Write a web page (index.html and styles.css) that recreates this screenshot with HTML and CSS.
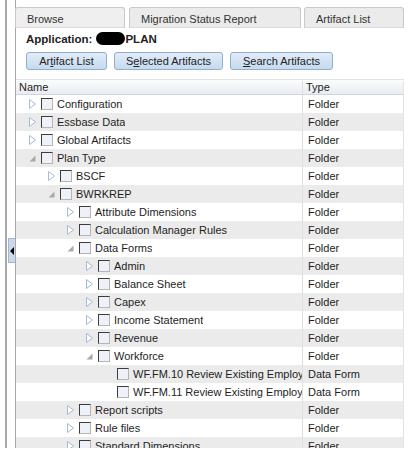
FILE: index.html
```html
<!DOCTYPE html>
<html lang="en">
<head>
    <meta charset="UTF-8">
    <title>Migration - Browse</title>
    <link rel="stylesheet" href="styles.css">
</head>
<body>

<div class="page">
    <div class="gutter">
        <div class="collapse"><span class="collapse-arrow"></span></div>
    </div>

    <div class="panel">
        <div class="tabs">
            <div class="tab tab-browse active">Browse</div>
            <div class="tab tab-migration">Migration Status Report</div>
            <div class="tab tab-artifacts">Artifact List</div>
        </div>

        <div class="app-title">
            Application: <span class="redacted"></span>PLAN
        </div>

        <div class="toolbar">
            <button class="btn btn-list">Ar<u>t</u>ifact List</button>
            <button class="btn btn-selected">S<u>e</u>lected Artifacts</button>
            <button class="btn btn-search"><u>S</u>earch Artifacts</button>
        </div>

        <div class="grid">
            <div class="grid-head">
                <div class="name">Name</div>
                <div class="type">Type</div>
            </div>

            <div class="grid-body">
                <div class="row">
                    <div class="name lvl-0"><svg class="exp" width="7" height="10"><path d="M0.5 0.5 L6.5 5 L0.5 9.5 Z" fill="#fff" stroke="#a6bad2"/></svg><span class="check"></span><span class="label">Configuration</span></div>
                    <div class="type">Folder</div>
                </div>
                <div class="row">
                    <div class="name lvl-0"><svg class="exp" width="7" height="10"><path d="M0.5 0.5 L6.5 5 L0.5 9.5 Z" fill="#fff" stroke="#a6bad2"/></svg><span class="check"></span><span class="label">Essbase Data</span></div>
                    <div class="type">Folder</div>
                </div>
                <div class="row">
                    <div class="name lvl-0"><svg class="exp" width="7" height="10"><path d="M0.5 0.5 L6.5 5 L0.5 9.5 Z" fill="#fff" stroke="#a6bad2"/></svg><span class="check"></span><span class="label">Global Artifacts</span></div>
                    <div class="type">Folder</div>
                </div>
                <div class="row">
                    <div class="name lvl-0"><svg class="exp" width="7" height="10"><path d="M6.5 2.5 L6.5 8.5 L0.5 8.5 Z" fill="#a9a9a9"/></svg><span class="check"></span><span class="label">Plan Type</span></div>
                    <div class="type">Folder</div>
                </div>
                <div class="row">
                    <div class="name lvl-1"><svg class="exp" width="7" height="10"><path d="M0.5 0.5 L6.5 5 L0.5 9.5 Z" fill="#fff" stroke="#a6bad2"/></svg><span class="check"></span><span class="label">BSCF</span></div>
                    <div class="type">Folder</div>
                </div>
                <div class="row">
                    <div class="name lvl-1"><svg class="exp" width="7" height="10"><path d="M6.5 2.5 L6.5 8.5 L0.5 8.5 Z" fill="#a9a9a9"/></svg><span class="check"></span><span class="label">BWRKREP</span></div>
                    <div class="type">Folder</div>
                </div>
                <div class="row">
                    <div class="name lvl-2"><svg class="exp" width="7" height="10"><path d="M0.5 0.5 L6.5 5 L0.5 9.5 Z" fill="#fff" stroke="#a6bad2"/></svg><span class="check"></span><span class="label">Attribute Dimensions</span></div>
                    <div class="type">Folder</div>
                </div>
                <div class="row">
                    <div class="name lvl-2"><svg class="exp" width="7" height="10"><path d="M0.5 0.5 L6.5 5 L0.5 9.5 Z" fill="#fff" stroke="#a6bad2"/></svg><span class="check"></span><span class="label">Calculation Manager Rules</span></div>
                    <div class="type">Folder</div>
                </div>
                <div class="row">
                    <div class="name lvl-2"><svg class="exp" width="7" height="10"><path d="M6.5 2.5 L6.5 8.5 L0.5 8.5 Z" fill="#a9a9a9"/></svg><span class="check"></span><span class="label">Data Forms</span></div>
                    <div class="type">Folder</div>
                </div>
                <div class="row">
                    <div class="name lvl-3"><svg class="exp" width="7" height="10"><path d="M0.5 0.5 L6.5 5 L0.5 9.5 Z" fill="#fff" stroke="#a6bad2"/></svg><span class="check"></span><span class="label">Admin</span></div>
                    <div class="type">Folder</div>
                </div>
                <div class="row">
                    <div class="name lvl-3"><svg class="exp" width="7" height="10"><path d="M0.5 0.5 L6.5 5 L0.5 9.5 Z" fill="#fff" stroke="#a6bad2"/></svg><span class="check"></span><span class="label">Balance Sheet</span></div>
                    <div class="type">Folder</div>
                </div>
                <div class="row">
                    <div class="name lvl-3"><svg class="exp" width="7" height="10"><path d="M0.5 0.5 L6.5 5 L0.5 9.5 Z" fill="#fff" stroke="#a6bad2"/></svg><span class="check"></span><span class="label">Capex</span></div>
                    <div class="type">Folder</div>
                </div>
                <div class="row">
                    <div class="name lvl-3"><svg class="exp" width="7" height="10"><path d="M0.5 0.5 L6.5 5 L0.5 9.5 Z" fill="#fff" stroke="#a6bad2"/></svg><span class="check"></span><span class="label">Income Statement</span></div>
                    <div class="type">Folder</div>
                </div>
                <div class="row">
                    <div class="name lvl-3"><svg class="exp" width="7" height="10"><path d="M0.5 0.5 L6.5 5 L0.5 9.5 Z" fill="#fff" stroke="#a6bad2"/></svg><span class="check"></span><span class="label">Revenue</span></div>
                    <div class="type">Folder</div>
                </div>
                <div class="row">
                    <div class="name lvl-3"><svg class="exp" width="7" height="10"><path d="M6.5 2.5 L6.5 8.5 L0.5 8.5 Z" fill="#a9a9a9"/></svg><span class="check"></span><span class="label">Workforce</span></div>
                    <div class="type">Folder</div>
                </div>
                <div class="row">
                    <div class="name lvl-4"><span class="exp-blank"></span><span class="check"></span><span class="label">WF.FM.10 Review Existing Employees</span></div>
                    <div class="type">Data Form</div>
                </div>
                <div class="row">
                    <div class="name lvl-4"><span class="exp-blank"></span><span class="check"></span><span class="label">WF.FM.11 Review Existing Employees</span></div>
                    <div class="type">Data Form</div>
                </div>
                <div class="row">
                    <div class="name lvl-2"><svg class="exp" width="7" height="10"><path d="M0.5 0.5 L6.5 5 L0.5 9.5 Z" fill="#fff" stroke="#a6bad2"/></svg><span class="check"></span><span class="label">Report scripts</span></div>
                    <div class="type">Folder</div>
                </div>
                <div class="row">
                    <div class="name lvl-2"><svg class="exp" width="7" height="10"><path d="M0.5 0.5 L6.5 5 L0.5 9.5 Z" fill="#fff" stroke="#a6bad2"/></svg><span class="check"></span><span class="label">Rule files</span></div>
                    <div class="type">Folder</div>
                </div>
                <div class="row">
                    <div class="name lvl-2"><svg class="exp" width="7" height="10"><path d="M0.5 0.5 L6.5 5 L0.5 9.5 Z" fill="#fff" stroke="#a6bad2"/></svg><span class="check"></span><span class="label">Standard Dimensions</span></div>
                    <div class="type">Folder</div>
                </div>
            </div>
        </div>
    </div>
</div>

</body>
</html>
```

FILE: styles.css
```css
body {
    margin: 0;
    padding: 0;
    background-color: #fff;
    color: #1e1e1e;
    font-family: "Liberation Sans", Arial, sans-serif;
    font-size: 11px;
}

.page {
    display: flex;
    height: 448px;
}

/* left collapse strip */
.gutter {
    width: 8px;
    margin-left: 5px;
    border-left: 2px solid #a8a8a8;
}

.collapse {
    margin-top: 238px;
    margin-left: 1px;
    width: 6px;
    height: 23px;
    background-color: #c9d9eb;
    border: 1px solid #a3b6cc;
    border-right: none;
    display: flex;
    align-items: center;
    justify-content: center;
}

.collapse-arrow {
    width: 0;
    height: 0;
    border-top: 4px solid transparent;
    border-bottom: 4px solid transparent;
    border-right: 4px solid #000;
}

.panel {
    width: 388px;
    border-left: 1px solid #a8a8a8;
    display: flex;
    flex-direction: column;
}

/* tabs */
.tabs {
    display: flex;
    margin-left: -1px;
    padding-top: 7px;
}

.tab {
    box-sizing: border-box;
    height: 21px;
    padding: 5px 0 0 11px;
    background-color: #ebebeb;
    border: 1px solid #c9c9c9;
    border-bottom-color: #dadada;
    border-radius: 3px 3px 0 0;
    color: #333;
}

.tab.active {
    background-color: #efefef;
}

.tab-browse {
    width: 110px;
}

.tab-migration {
    width: 172px;
    margin-left: 4px;
}

.tab-artifacts {
    width: 100px;
    margin-left: 3px;
}

.app-title {
    padding: 2px 0 0 10px;
    height: 17px;
    font-weight: bold;
    font-size: 11.5px;
    color: #222;
    display: flex;
    align-items: center;
}

.redacted {
    display: inline-block;
    width: 29px;
    height: 13px;
    margin-left: 4px;
    background-color: #000;
    border-radius: 7px;
}

/* buttons */
.toolbar {
    display: flex;
    gap: 7px;
    padding: 5px 0 0 10px;
}

.btn {
    box-sizing: border-box;
    height: 18px;
    padding: 0;
    background: linear-gradient(#e1ecf8, #c6daef);
    border: 1px solid #94adc9;
    border-radius: 3px;
    color: #222;
    font-family: "Liberation Sans", Arial, sans-serif;
    font-size: 11px;
}

.btn-list {
    width: 81px;
}

.btn-selected {
    width: 109px;
}

.btn-search {
    width: 103px;
}

/* tree grid */
.grid {
    margin-top: 9px;
    flex: 1;
    overflow: hidden;
}

.grid-head,
.row {
    display: flex;
}

.grid-head {
    height: 14px;
    background: linear-gradient(#fbfcfd, #e8ecf1);
    border-top: 1px solid #e2e2e2;
    border-bottom: 1px solid #cfd6de;
    align-items: center;
}

.grid-head .name {
    padding-left: 3px;
}

.grid-head .type {
    padding-left: 3px;
}

.name {
    box-sizing: border-box;
    width: 286px;
    white-space: nowrap;
    overflow: hidden;
    display: flex;
    align-items: center;
}

.label {
    overflow: hidden;
    min-width: 0;
}

.type {
    box-sizing: border-box;
    width: 102px;
    border-left: 1px solid #dfdfdf;
    border-right: 1px solid #e4e4e4;
    padding-left: 5px;
    display: flex;
    align-items: center;
}

.row {
    height: 18px;
}

.row:nth-child(even) {
    background-color: #ebebeb;
}

.lvl-0 { padding-left: 13px; }
.lvl-1 { padding-left: 32px; }
.lvl-2 { padding-left: 51px; }
.lvl-3 { padding-left: 70px; }
.lvl-4 { padding-left: 89px; }

.exp {
    flex: none;
    margin-right: 5px;
}

.exp-blank {
    flex: none;
    width: 7px;
    margin-right: 5px;
}

.check {
    flex: none;
    box-sizing: border-box;
    width: 12px;
    height: 12px;
    margin-right: 4px;
    background-color: #eef2f8;
    border: 1px solid #b5b5b5;
    border-top-color: #3c3c3c;
    border-left-color: #3c3c3c;
}
```
